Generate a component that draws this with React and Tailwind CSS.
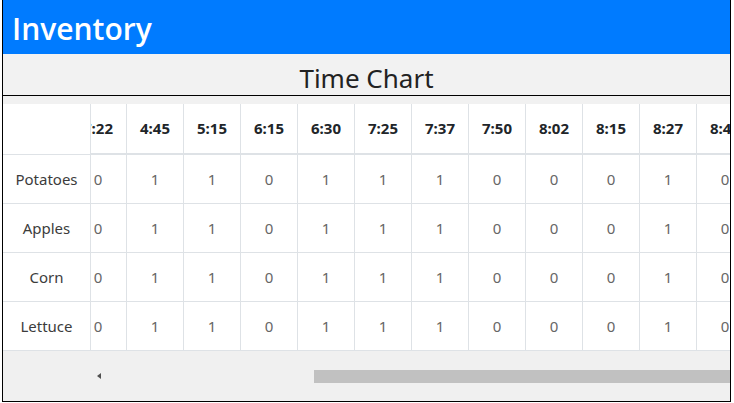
const times = [":22", "4:45", "5:15", "6:15", "6:30", "7:25", "7:37", "7:50", "8:02", "8:15", "8:27", "8:40", "8:52", "9:05"];
const values = [0, 1, 1, 0, 1, 1, 1, 0, 0, 0, 1, 0, 1, 1];
const items = ["Potatoes", "Apples", "Corn", "Lettuce"];

const App = () => {
  return (
    <div
      className="w-[734px] h-[403px] bg-white pl-[2px]"
      style={{ fontFamily: '"Noto Sans", "Open Sans", sans-serif' }}
    >
      <div className="w-[729px] h-[402px] border-x border-b border-black flex flex-col overflow-hidden">

        {/* Header */}
        <div
          className="h-[54px] shrink-0 bg-[#007bff] text-white text-[30px] font-semibold px-[9px] pt-[2px] flex items-center"
          style={{ fontFamily: '"Open Sans", "Noto Sans", sans-serif' }}
        >
          Inventory
        </div>

        {/* Title */}
        <div className="h-[42px] shrink-0 bg-[#f2f2f2] border-b border-black text-center text-[26px] leading-[32px] pt-[8px] text-[#222]">
          Time Chart
        </div>

        <div className="h-[8px] shrink-0 bg-[#f1f1f1]"></div>

        {/* Table */}
        <div className="flex h-[247px] shrink-0 bg-white text-[15px]">
          <div className="w-[88px] shrink-0 border-r border-[#dee2e6] flex flex-col">
            <div className="h-[51px] border-b border-[#dee2e6]"></div>
            {items.map((name) => (
              <div
                key={name}
                className="h-[49px] border-b border-[#dee2e6] flex items-center justify-center text-[#3c3c3c]"
              >
                {name}
              </div>
            ))}
          </div>

          <div className="flex-1 overflow-hidden">
            <div className="-ml-[21px] flex">
              {times.map((t, i) => (
                <div key={t} className="w-[57px] shrink-0 border-r border-[#dee2e6] flex flex-col">
                  <div className="h-[51px] border-b-2 border-[#dee2e6] flex items-center justify-center font-bold text-[#212529]">
                    {t === ":22" ? "7:22" : t}
                  </div>
                  {items.map((name) => (
                    <div
                      key={name}
                      className="h-[49px] border-b border-[#dee2e6] flex items-center justify-center text-[#666]"
                    >
                      {values[i]}
                    </div>
                  ))}
                </div>
              ))}
            </div>
          </div>
        </div>

        {/* Scrollbar */}
        <div className="flex-1 bg-[#f0f0f0] pl-[88px] flex items-center">
          <div className="w-[15px] h-[13px] flex items-center justify-center">
            <div className="w-0 h-0 border-y-[3.5px] border-y-transparent border-r-[4px] border-r-[#505050]"></div>
          </div>
          <div className="flex-1 h-[13px] flex justify-end">
            <div className="w-[416px] h-[13px] bg-[#c1c1c1]"></div>
          </div>
        </div>
      </div>
    </div>
  );
};

export default App;
